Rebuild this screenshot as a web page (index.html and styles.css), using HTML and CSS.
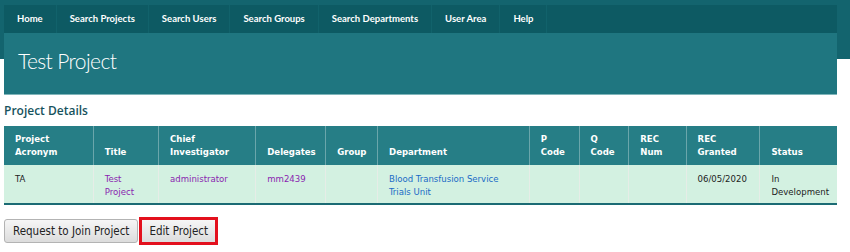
FILE: index.html
```html
<!DOCTYPE html>
<html lang="en">
<head>
    <meta charset="UTF-8">
    <title>Test Project</title>
    <link rel="stylesheet" href="styles.css">
</head>
<body>
    <div id="page">
        <div class="shell">
            <ul class="nav">
                <li><a href="#">Home</a></li>
                <li><a href="#">Search Projects</a></li>
                <li><a href="#">Search Users</a></li>
                <li><a href="#">Search Groups</a></li>
                <li><a href="#">Search Departments</a></li>
                <li><a href="#">User Area</a></li>
                <li><a href="#">Help</a></li>
            </ul>
            <div class="banner">
                <h1>Test Project</h1>
            </div>

            <h2 class="section-title">Project Details</h2>
            <table class="details">
                <thead>
                    <tr>
                        <th class="c-acr">Project<br>Acronym</th>
                        <th class="c-title">Title</th>
                        <th class="c-ci">Chief<br>Investigator</th>
                        <th class="c-del">Delegates</th>
                        <th class="c-grp">Group</th>
                        <th class="c-dept">Department</th>
                        <th class="c-p">P<br>Code</th>
                        <th class="c-q">Q<br>Code</th>
                        <th class="c-rec">REC<br>Num</th>
                        <th class="c-gr">REC<br>Granted</th>
                        <th class="c-st">Status</th>
                    </tr>
                </thead>
                <tbody>
                    <tr>
                        <td>TA</td>
                        <td><a class="visited" href="#">Test<br>Project</a></td>
                        <td><a class="visited" href="#">administrator</a></td>
                        <td><a class="visited" href="#">mm2439</a></td>
                        <td></td>
                        <td><a class="link" href="#">Blood Transfusion Service<br>Trials Unit</a></td>
                        <td></td>
                        <td></td>
                        <td></td>
                        <td>06/05/2020</td>
                        <td>In<br>Development</td>
                    </tr>
                </tbody>
            </table>

            <div class="actions">
                <button class="btn">Request to Join Project</button>
                <button class="btn btn-marked">Edit Project</button>
            </div>
        </div>
    </div>
</body>
</html>
```

FILE: styles.css
```css
body {
    margin: 0;
    background: #fff;
    font-family: "DejaVu Sans Condensed", "DejaVu Sans", sans-serif;
    font-stretch: condensed;
    color: #222;
}

#page {
    background: linear-gradient(#13646e 0, #13646e 59px, #fff 59px);
    padding-top: 5px;
}

.shell {
    width: 833px;
    margin-left: 4px;
}

/* top navigation */
.nav {
    display: flex;
    list-style: none;
    margin: 0;
    padding: 0;
    height: 28px;
    background: #0d5a63;
}

.nav li {
    border-right: 1px solid #11626b;
}

.nav a {
    display: block;
    height: 28px;
    line-height: 28px;
    padding: 0 13px;
    color: #fff;
    text-decoration: none;
    font-family: Lato, "Open Sans", sans-serif;
    font-weight: 700;
    font-size: 9.5px;
}

.banner {
    height: 61px;
    background: #1f7680;
    border-bottom: 1px solid #7fb5ba;
}

.banner h1 {
    margin: 0;
    padding: 14px 0 0 14px;
    font-family: Lato, sans-serif;
    font-weight: 300;
    font-size: 21px;
    letter-spacing: -0.6px;
    line-height: 28px;
    color: #fff;
}

.section-title {
    margin: 9px 0 8px;
    font-family: "Open Sans", sans-serif;
    font-stretch: normal;
    font-weight: 600;
    font-size: 12px;
    line-height: 14px;
    color: #17535d;
}

/* details table */
.details {
    width: 100%;
    border-collapse: collapse;
    font-size: 9.5px;
    line-height: 13px;
}

.details th {
    background: #267e86;
    color: #fff;
    font-weight: 700;
    text-align: left;
    vertical-align: bottom;
    padding: 6px 8px 7px 11px;
    border-left: 1px solid #6aa6ab;
}

.details th:first-child,
.details td:first-child {
    border-left: none;
}

.details td {
    background: #d3f1e1;
    vertical-align: top;
    padding: 7px 8px 5px 11px;
    border-left: 1px solid #e6ede7;
    border-bottom: 2px solid #1b6b74;
}

.details a {
    text-decoration: none;
}

.details a.visited {
    color: #8a1fb0;
}

.details a.link {
    color: #1a6bc6;
}

.c-acr { width: 71px; }
.c-title { width: 46px; }
.c-ci { width: 78px; }
.c-del { width: 50px; }
.c-grp { width: 32px; }
.c-dept { width: 135px; }
.c-p { width: 30px; }
.c-q { width: 30px; }
.c-rec { width: 38px; }
.c-gr { width: 54px; }

/* buttons */
.actions {
    display: flex;
    align-items: center;
    gap: 1px;
    margin-top: 12px;
}

.btn {
    height: 24px;
    padding: 0 8px;
    font-family: "DejaVu Sans Condensed", "DejaVu Sans", sans-serif;
    font-stretch: condensed;
    font-size: 11.5px;
    color: #222;
    background: linear-gradient(#f6f6f6, #dcdcdc);
    border: 1px solid #b3b3b3;
    border-radius: 3px;
}

.btn-marked {
    height: 28px;
    padding: 0 7px;
    border: 3px solid #e3101d;
    border-radius: 0;
}
```
